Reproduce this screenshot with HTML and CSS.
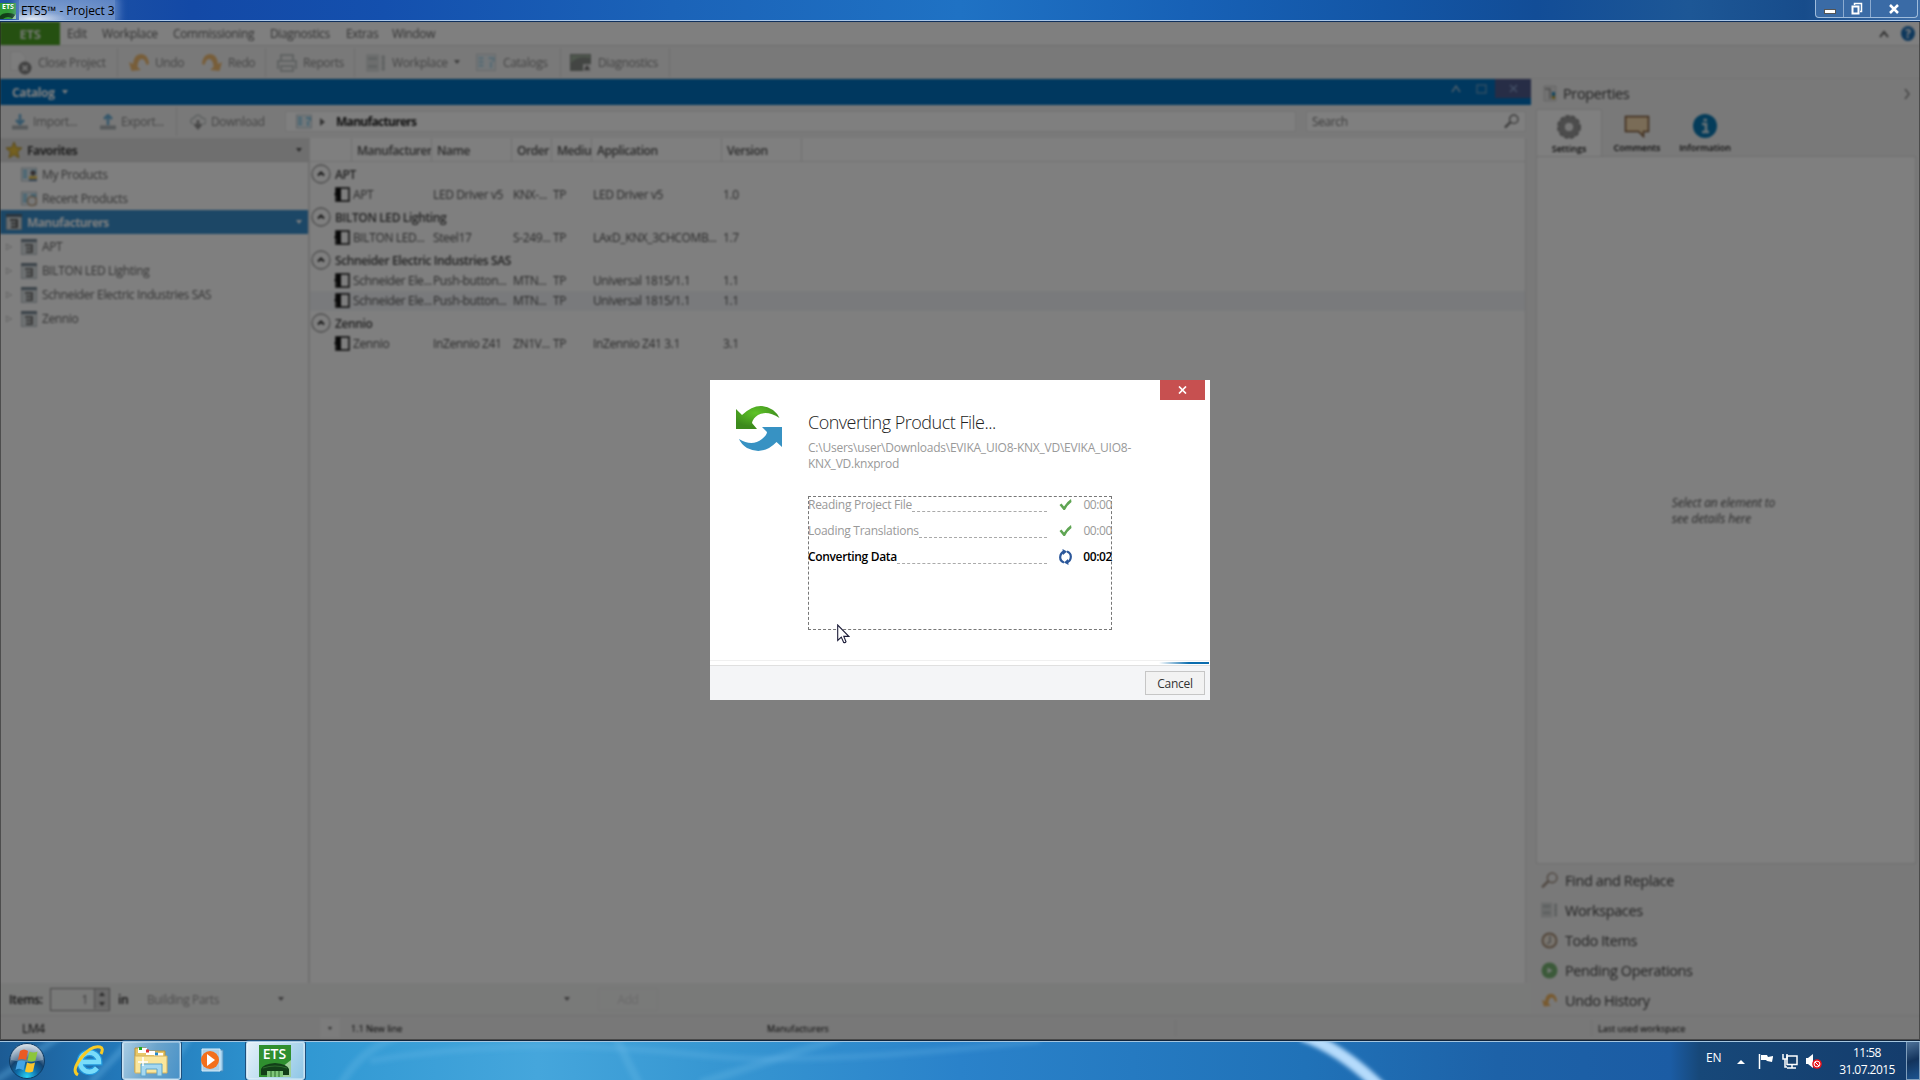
FILE: index.html
```html
<!DOCTYPE html>
<html lang="en">
<head>
  <meta charset="UTF-8" />
  <meta name="viewport" content="width=device-width, initial-scale=1.0"/>
  <title>ETS5 - Project 3</title>
  <link rel="stylesheet" href="styles.css">
</head>
<body>

  <!-- shared icons -->
  <svg class="sprite" width="0" height="0">
    <symbol id="i-ets" viewBox="0 0 32 32">
      <rect width="32" height="32" fill="#2f8f2f"/>
      <path d="M18 26 32 15v17H18z" fill="#9fd09a"/>
      <path d="M2 30v-6q2-5 14-6 12 1 14 6v6z" fill="#123f18"/>
      <path d="M8 32v-6h16v6z" fill="#7fc67a"/>
      <path d="M4 23q12-4 24 0M12 32v-6M16 32v-6M20 32v-6" stroke="#2c6b2c" stroke-width="1" fill="none"/>
    </symbol>
    <symbol id="i-undo" viewBox="0 0 20 20">
      <path d="M0 9 2.500 18 12 17 8.500 14Q9 6 13 6q3 0 4.500 6L20 11Q19 1 12 1 5 1 4 11z" fill="#f0a030"/>
    </symbol>
    <symbol id="i-box" viewBox="0 0 16 16">
      <rect x=".5" y=".5" width="15" height="15" fill="#d5dde0" stroke="#a3adb3"/>
      <path d="M0 1.500h16" stroke="#566878" stroke-width="3"/>
      <path d="M4 6h7v7H5M5 9.500h5" stroke="#5a5a5a" stroke-width="2" fill="none"/>
    </symbol>
    <symbol id="i-catalog" viewBox="0 0 16 16">
      <rect x=".5" y="1" width="15" height="13" fill="#dcecf4" stroke="#aab8c0"/>
      <path d="M2 4h4M2 7h4M2 10h4M10 4h4v3M12 7v5" stroke="#5eb4dc" stroke-width="1.800" fill="none"/>
    </symbol>
    <symbol id="i-device" viewBox="0 0 16 15">
      <rect x="2" y="1" width="13" height="13" fill="#fff" stroke="#222" stroke-width="1.600"/>
      <path d="M2 1h5v13H3V9L0 7.500 2 5z" fill="#111"/>
    </symbol>
    <symbol id="i-up" viewBox="0 0 20 20">
      <circle cx="10" cy="10" r="9" fill="none" stroke="#999" stroke-width="1.300"/>
      <path d="m7 11.500 3-3 3 3" stroke="#333" stroke-width="2" fill="none"/>
    </symbol>
    <symbol id="i-search" viewBox="0 0 16 16">
      <circle cx="10.500" cy="5.500" r="4.500" fill="none" stroke="currentColor" stroke-width="1.500"/>
      <path d="M7 8.500 1 14.500" stroke="currentColor" stroke-width="2.500"/>
    </symbol>
    <symbol id="i-check" viewBox="0 0 12 11">
      <path d="M0 6 2 4.500 4.500 7.500Q7 3 11.500 0L12 3Q8 6 5.500 11H4z" fill="#5fa553"/>
    </symbol>
    <symbol id="i-grid" viewBox="0 0 18 16">
      <rect width="12" height="16" fill="#ced2d2"/>
      <path d="M2 4h8M2 11h8M14 3h3M14 8h3M14 13h3M15.500 1v14" stroke="#a9b0b0" stroke-width="2.500"/>
    </symbol>
  </svg>

  <div class="titlebar">
    <div class="app-icon"><svg width="16" height="8" viewBox="0 0 16 8"><path d="M0 8V5q2-3 8-3t8 3v3h-3q-5-4-10 0z" fill="#123f18"/><path d="M12 8h4V3z" fill="#9fd09a"/></svg><b>ETS</b></div>
    <span class="title-text">ETS5™ - Project 3</span>
    <div class="win-buttons">
      <span><svg width="12" height="14"><rect x=".5" y="7.500" width="11" height="4" fill="#fff" stroke="#555"/></svg></span>
      <span><svg width="12" height="14"><path d="M3.500 3V1.500h7v8H9" fill="none" stroke="#fff" stroke-width="1.500"/><rect x="1.500" y="4.500" width="6" height="7" fill="none" stroke="#fff" stroke-width="2"/></svg></span>
      <span class="wide"><svg width="12" height="14"><path d="m2 3 8 8M10 3l-8 8" stroke="#fff" stroke-width="2.500"/></svg></span>
    </div>
  </div>

  <div class="window">
    <div class="app">
      <div class="menu">
        <b class="ets">ETS</b>
        <span class="m-edit">Edit</span><span class="m-work">Workplace</span><span class="m-comm">Commissioning</span><span class="m-diag">Diagnostics</span><span class="m-extras">Extras</span><span>Window</span>
        <div class="menu-right">
          <svg width="10" height="8"><path d="m1 7 4-5 4 5" stroke="#555" stroke-width="1.800" fill="none"/></svg>
          <i class="help">?</i>
        </div>
      </div>

      <div class="toolbar">
        <div class="tool t-close"><svg class="wide-icon" width="27" height="28"><path d="M3.500 2.500h10l5 5v14h-15z" fill="#fff" stroke="#ddd"/><circle cx="18" cy="19" r="6.500" fill="#444"/><path d="m15.500 16.500 5 5M20.500 16.500l-5 5" stroke="#ddd" stroke-width="2"/></svg>Close Project</div>
        <i class="sep"></i>
        <div class="tool t-undo"><svg width="20" height="20"><use href="#i-undo"/></svg>Undo</div>
        <div class="tool t-redo"><svg class="flip" width="20" height="20"><use href="#i-undo"/></svg>Redo</div>
        <i class="sep"></i>
        <div class="tool t-reports"><svg width="20" height="18"><path d="M4 7V1h12v6M1 15V7h18v8M4 12h12v5H4z" fill="none" stroke="#a6adad" stroke-width="2"/></svg>Reports</div>
        <i class="sep"></i>
        <div class="tool t-workplace"><svg width="20" height="18"><use href="#i-grid"/></svg>Workplace<i class="caret"></i></div>
        <div class="tool t-catalogs"><svg width="22" height="20"><use href="#i-catalog"/></svg>Catalogs</div>
        <i class="sep"></i>
        <div class="tool t-diag"><svg width="22" height="20"><rect y="1" width="21" height="17" fill="#737a73"/><path d="M1 10Q8 2 20 5V2H1z" fill="#8fa38c"/><rect x="13" y="11" width="8" height="8" fill="#ddd"/><path d="m17 12 3 5h-6z" fill="#555"/></svg>Diagnostics</div>
        <i class="sep"></i>
      </div>

      <div class="body">
        <div class="left">
          <div class="catalog-bar">
            <b>Catalog</b><i class="caret"></i>
            <div class="pane-buttons">
              <svg width="10" height="10"><path d="m1 8 4-6 4 6" stroke="#9bbbd4" stroke-width="1.500" fill="none"/></svg>
              <svg width="11" height="10"><rect x="1" y="1" width="9" height="8" stroke="#6aa0c8" stroke-width="1.300" fill="none"/></svg>
              <span><svg width="9" height="9"><path d="m1 1 7 7M8 1 1 8" stroke="#8aa4d0" stroke-width="1.300"/></svg></span>
            </div>
          </div>

          <div class="subbar">
            <div class="sub s-import"><svg width="16" height="16"><path d="M8 0v9M4 6l4 4 4-4" stroke="#4a9dcf" stroke-width="2.500" fill="none"/><path d="M0 13.500h16" stroke="#9ba2a6" stroke-width="4"/></svg>Import...</div>
            <div class="sub s-export"><svg width="16" height="16"><path d="M8 11V2M4 5l4-4 4 4" stroke="#4a9dcf" stroke-width="2.500" fill="none"/><path d="M0 13.500h16" stroke="#9ba2a6" stroke-width="4"/></svg>Export...</div>
            <i class="sep"></i>
            <div class="sub s-download"><svg width="16" height="16"><path d="M3 10Q0 9 1 6q1-2 3-2 4-6 8 0 4 0 4 4-1 2-3 2" stroke="#aeb6b6" stroke-width="1.500" fill="none"/><path d="M8 6v7M4.500 10 8 14l3.500-4" stroke="#777" stroke-width="2.500" fill="none"/></svg>Download</div>
            <div class="path"><svg width="16" height="16"><use href="#i-catalog"/></svg><svg class="arrow" width="5" height="8"><path d="m0 0 5 4-5 4z" fill="#333"/></svg><b>Manufacturers</b></div>
            <div class="search"><span>Search</span><svg width="15" height="15"><use href="#i-search"/></svg></div>
          </div>

          <div class="panes">
            <div class="tree">
              <div class="head"><svg width="16" height="16"><path d="m8 0 2.300 5.500 5.700.5-4.400 3.800L13 16l-5-3.300L3 16l1.400-6.200L0 6l5.700-.5z" fill="#e8c040" stroke="#b09030"/></svg><b>Favorites</b><i class="caret"></i></div>
              <div class="leaf"><svg width="16" height="16"><use href="#i-catalog"/><circle cx="12" cy="6" r="2.500" fill="#433"/><path d="M8 9h8v3H8z" fill="#e8b830"/><path d="M8 12h8v2H8z" fill="#446c99"/></svg>My Products</div>
              <div class="leaf"><svg width="16" height="16"><use href="#i-catalog"/><circle cx="11" cy="10" r="4.500" fill="#eee" stroke="#a58660" stroke-width="1.500"/></svg>Recent Products</div>
              <div class="head active"><svg width="16" height="16"><use href="#i-box"/></svg><b>Manufacturers</b><i class="caret"></i></div>
              <div class="leaf"><i class="exp">▷</i><svg width="16" height="16"><use href="#i-box"/></svg>APT</div>
              <div class="leaf"><i class="exp">▷</i><svg width="16" height="16"><use href="#i-box"/></svg>BILTON LED Lighting</div>
              <div class="leaf"><i class="exp">▷</i><svg width="16" height="16"><use href="#i-box"/></svg>Schneider Electric Industries SAS</div>
              <div class="leaf"><i class="exp">▷</i><svg width="16" height="16"><use href="#i-box"/></svg>Zennio</div>
            </div>

            <div class="grid">
              <div class="cols"><span></span><span>Manufacturer</span><span>Name</span><span>Order</span><span>Mediu</span><span>Application</span><span>Version</span></div>
              <div class="group"><svg width="20" height="20"><use href="#i-up"/></svg>APT</div>
              <div class="row"><svg width="16" height="15"><use href="#i-device"/></svg><span>APT</span><span>LED Driver v5</span><span>KNX-...</span><span>TP</span><span>LED Driver v5</span><span>1.0</span></div>
              <div class="group"><svg width="20" height="20"><use href="#i-up"/></svg>BILTON LED Lighting</div>
              <div class="row"><svg width="16" height="15"><use href="#i-device"/></svg><span>BILTON LED...</span><span>Steel17</span><span>S-249...</span><span>TP</span><span>LAxD_KNX_3CHCOMB...</span><span>1.7</span></div>
              <div class="group"><svg width="20" height="20"><use href="#i-up"/></svg>Schneider Electric Industries SAS</div>
              <div class="row"><svg width="16" height="15"><use href="#i-device"/></svg><span>Schneider Ele...</span><span>Push-button...</span><span>MTN...</span><span>TP</span><span>Universal 1815/1.1</span><span>1.1</span></div>
              <div class="row hover"><svg width="16" height="15"><use href="#i-device"/></svg><span>Schneider Ele...</span><span>Push-button...</span><span>MTN...</span><span>TP</span><span>Universal 1815/1.1</span><span>1.1</span></div>
              <div class="group"><svg width="20" height="20"><use href="#i-up"/></svg>Zennio</div>
              <div class="row"><svg width="16" height="15"><use href="#i-device"/></svg><span>Zennio</span><span>InZennio Z41</span><span>ZN1V...</span><span>TP</span><span>InZennio Z41 3.1</span><span>3.1</span></div>
            </div>
          </div>

          <div class="items">
            <span class="lbl">Items:</span>
            <div class="spinner"><span>1</span><div class="arrows"><i class="caret flipv"></i><i class="caret"></i></div></div>
            <span class="lbl in">in</span>
            <div class="combo parts"><span>Building Parts</span><i class="caret"></i></div>
            <div class="combo"><i class="caret"></i></div>
            <div class="add">Add</div>
          </div>
        </div>

        <div class="right">
          <div class="prop-head"><svg width="14" height="18"><path d="M1 1h12v15H1z" fill="#e5e5e5" stroke="#ccc"/><path d="M2 4h5v10" stroke="#999" stroke-width="1.500" fill="none"/><path d="M9 7h3v4H9z" fill="#2288bb"/><path d="M9 11h3v3H9z" fill="#bba030"/></svg><span>Properties</span><svg class="chev" width="7" height="12"><path d="m1 1 4 5-4 5" stroke="#888" stroke-width="1.500" fill="none"/></svg></div>
          <div class="tabs">
            <div class="tab on"><svg width="24" height="24"><circle cx="12" cy="12" r="7.500" fill="none" stroke="#999" stroke-width="7"/><circle cx="12" cy="12" r="11" fill="none" stroke="#888" stroke-width="2" stroke-dasharray="4 2"/><circle cx="12" cy="12" r="3" fill="#eee"/></svg>Settings</div>
            <div class="tab cm"><svg width="26" height="24"><path d="M1.500 2.500h23v15h-5v5l-5-5h-13z" fill="#f4d9ae" stroke="#7a5536" stroke-width="1.500"/></svg>Comments</div>
            <div class="tab inf"><svg width="24" height="24"><circle cx="12" cy="12" r="12" fill="#0878b4"/><path d="M9 10h4v8M9 18h7M10.500 6h3.500" stroke="#cfe4ee" stroke-width="2.600" fill="none"/></svg>Information</div>
          </div>
          <div class="details"><p>Select an element to<br>see details here</p></div>
          <ul class="tools">
            <li><svg width="17" height="17" color="#8a7564"><use href="#i-search"/></svg>Find and Replace</li>
            <li><svg width="17" height="16"><use href="#i-grid"/></svg>Workspaces</li>
            <li><svg width="17" height="17"><circle cx="8.500" cy="8.500" r="7" fill="#f2e6d6" stroke="#8a6a4a" stroke-width="2"/><path d="M9 4v6L6 12" stroke="#777" stroke-width="1.500" fill="none"/></svg>Todo Items</li>
            <li><svg width="17" height="17"><circle cx="8.500" cy="8.500" r="8" fill="#4fa04a"/><path d="M6.500 5.500v6l5-3z" fill="#e8f5e8"/></svg>Pending Operations</li>
            <li><svg width="17" height="15"><use href="#i-undo"/></svg>Undo History</li>
          </ul>
        </div>
      </div>

      <div class="status">
        <span class="st-line">LM4</span><div class="st-drop"><i class="caret"></i></div><span class="st-new">1.1 New line</span><span class="st-man">Manufacturers</span><span class="st-gap"></span><span class="st-last">Last used workspace</span>
      </div>
    </div>
    <div class="shade"></div>
  </div>

  <div class="taskbar">
    <svg class="wall" width="1920" height="39" preserveAspectRatio="none">
      <defs>
        <linearGradient id="wg"><stop offset="0" stop-color="#1c5b94"/><stop offset=".06" stop-color="#2277b8"/><stop offset=".15" stop-color="#2f97d2"/><stop offset=".28" stop-color="#45a6dc"/><stop offset=".37" stop-color="#3797d2"/><stop offset=".5" stop-color="#2a82ca"/><stop offset=".68" stop-color="#2072b8"/><stop offset=".78" stop-color="#1d62a8"/><stop offset=".87" stop-color="#1b5ca4"/><stop offset=".885" stop-color="#174879"/><stop offset="1" stop-color="#143c6c"/></linearGradient>
        <filter id="soft" x="-20%" y="-50%" width="140%" height="200%"><feGaussianBlur stdDeviation="2.200"/></filter>
      </defs>
      <rect width="1920" height="39" fill="url(#wg)"/>
      <g filter="url(#soft)" fill="none">
        <path d="M1302-6Q1342 8 1382 48" stroke="#b5dbfc" stroke-width="12"/>
        <path d="M340 45Q360 8 400-5M615-5 640 45M700 42 840-3" stroke="#7cc4ee" stroke-opacity=".22" stroke-width="8"/>
        <path d="M370 20Q520-6 700 14 800 26 1040 0" stroke="#7cc4ee" stroke-opacity=".2" stroke-width="6"/>
        <path d="M-5 40 60-5M90 42 135-5M160 42 190-5" stroke="#68b4e4" stroke-opacity=".35" stroke-width="7"/>
      </g>
    </svg>
    <div class="task start"><svg width="38" height="38" viewBox="0 0 38 38">
      <defs><radialGradient id="orb" cx=".5" cy=".95" r=".9"><stop offset="0" stop-color="#27d3f5"/><stop offset=".35" stop-color="#0e6ba8"/><stop offset=".6" stop-color="#15436f"/><stop offset="1" stop-color="#c0cedb"/></radialGradient></defs>
      <circle cx="19" cy="19" r="17.500" fill="url(#orb)" stroke="#0e3c66"/>
      <path d="M3 18a16 16 0 0 1 32 0Q19 22 3 18z" fill="#fff" fill-opacity=".28"/>
      <path d="M12 9q4-3 8 0l-2 9q-4-2-8 0z" fill="#ea5a24"/>
      <path d="M21.500 9.500q4 2 8 0l-2 9q-4 2-8 0z" fill="#8cc63c"/>
      <path d="M9.500 19.500q4-2 8 0l-2 9q-4-3-8-.5z" fill="#45a4e4"/>
      <path d="M19 20.500q4 2 8 0l-2 9q-4 2-8 0z" fill="#fcc52c"/></svg></div>
    <div class="task ie"><svg width="32" height="34" viewBox="0 0 32 34">
      <path d="M8 19h18a9.500 9.500 0 1 0-2 6" transform="translate(0 -1)" stroke="#2398dc" stroke-width="7" fill="none"/>
      <path d="M8 19h18a9.500 9.500 0 1 0-2 6" transform="translate(0 -1)" stroke="#79dcfa" stroke-width="4.500" fill="none"/>
      <path d="M5 31Q-2 27 8 14T27 3q4 1 1 7" stroke="#f8cb25" stroke-width="3" fill="none"/></svg></div>
    <div class="task framed"><svg width="34" height="32" viewBox="0 0 34 32">
      <path d="M1 27V3h11l2 3h17v21z" fill="#e8c768" stroke="#b8933c"/>
      <path d="M4 3h9v5H4zM12 6h9v4h-9zM20 8h9v4h-9z" fill="#fff"/>
      <path d="M5 3.500h3" stroke="#2a2" stroke-width="3"/><path d="M12 6h3" stroke="#d33" stroke-width="3"/><path d="M21 9h3" stroke="#28c" stroke-width="3"/>
      <path d="M1 11h32v17H1z" fill="#fae69c" stroke="#d5b25c"/>
      <path d="M7 31V19h21v12h-5v-7H12v7z" fill="#a5d8f0" stroke="#5aa4cc"/>
      <path d="M9 12v9M4 17h10" stroke="#fff" stroke-width="1.500"/></svg></div>
    <div class="task wmp"><svg width="28" height="28" viewBox="0 0 28 28">
      <path d="M18 3h5v21h-5z" fill="#9dcdec" stroke="#4d8dbb"/><path d="M2 2h18v22H2z" fill="#a9cfe8" stroke="#d7ecf8"/>
      <circle cx="10" cy="13" r="9" fill="#f36f1c"/><path d="M7 7v12l8-6z" fill="#fff"/></svg></div>
    <div class="task framed current"><div class="ets-tile"><svg width="32" height="32"><use href="#i-ets"/></svg><b>ETS</b></div></div>
    <div class="tray">
      <span class="lang">EN</span>
      <svg class="t-up" width="8" height="4"><path d="m0 4 4-4 4 4z" fill="#fff"/></svg>
      <svg class="t-flag" width="16" height="15"><path d="M1.500 0v15" stroke="#fff" stroke-width="1.500"/><path d="M3 1h6l1 2 5-1v1l-1 5-5-1-1-1H3z" fill="#fff"/></svg>
      <svg class="t-net" width="16" height="15"><rect x="5" y="2" width="10" height="8.500" fill="#17406c" stroke="#fff" stroke-width="1.500"/><path d="M5 14h9M10 11v3M1 0v5h4V0M3 5v8h2" stroke="#fff" stroke-width="1.500" fill="none"/></svg>
      <svg class="t-vol" width="16" height="15"><path d="M0 4h2l5-4v14l-5-4H0z" fill="#fff"/><circle cx="11" cy="10" r="4.800" fill="#e8141c"/><circle cx="11" cy="10" r="2.900" fill="none" stroke="#fff" stroke-width="1"/><path d="m9 8 4 4" stroke="#fff" stroke-width="1"/></svg>
      <div class="clock">11:58<br>31.07.2015</div>
      <div class="peek"></div>
    </div>
  </div>

  <div class="dialog">
    <button class="x"><svg width="9" height="8"><path d="m1 .5 7 7M8 .5l-7 7" stroke="#fff" stroke-width="1.700"/></svg></button>
    <svg class="sync" width="46" height="46" viewBox="0 0 46 46">
      <defs>
        <radialGradient id="gr" cx=".45" cy=".3" r=".6"><stop offset="0" stop-color="#5fc428"/><stop offset="1" stop-color="#3c8a1c"/></radialGradient>
      </defs>
      <path d="M0 3 6 9Q22-6 37 4 41 7 43.500 12 31 4 22 9 17 12 16 17L21 23H0z" fill="url(#gr)"/>
      <path d="M26 21H46V41L40.500 36Q27 50 11 42 5 38 3 33 16 41 26 33 31 29 31 26z" fill="#3792c3"/>
    </svg>
    <div class="dlg-main">
      <h1>Converting Product File...</h1>
      <p class="file">C:\Users\user\Downloads\EVIKA_UIO8-KNX_VD\EVIKA_UIO8-<br>KNX_VD.knxprod</p>
      <div class="steps">
        <div class="step"><span>Reading Project File</span><i></i><svg width="12" height="11"><use href="#i-check"/></svg><em>00:00</em></div>
        <div class="step"><span>Loading Translations</span><i></i><svg width="12" height="11"><use href="#i-check"/></svg><em>00:00</em></div>
        <div class="step now"><span>Converting Data</span><i></i><svg width="13" height="16" viewBox="0 0 13 16"><path d="M5 13.500Q1 12 1.200 8 1.400 4 5 2.600M8 2.500Q12 4 11.800 8 11.600 12 8 13.400" stroke="#2b579a" stroke-width="2.200" fill="none"/><path d="M3.500 0 8 2.500 4 6zM9.500 16 5 13.500 9 10z" fill="#2b579a"/></svg><em>00:02</em></div>
      </div>
    </div>
    <div class="progress"><i></i></div>
    <div class="dlg-foot"><button>Cancel</button></div>
  </div>

  <svg class="cursor" width="13" height="20"><path d="M.7 1v15.500l3.600-3.400L6.700 18.500q1.500.6 2.300-.8L6.800 12.400h5z" fill="#fff" stroke="#1c1c38" stroke-width="1.100"/></svg>

</body>
</html>
```

FILE: styles.css
```css
* {
  box-sizing: border-box;
}
body {
  margin: 0;
  width: 1920px;
  height: 1080px;
  overflow: hidden;
  position: relative;
  font-family: "Open Sans", "Noto Sans", sans-serif;
  font-size: 12px;
  letter-spacing: -0.38px;
  color: #444;
  display: flex;
  flex-direction: column;
}
i, em {
  font-style: normal;
}
svg {
  display: block;
  flex: none;
}
span, b, h1, li {
  white-space: nowrap;
}
.sprite {
  position: absolute;
}
.caret {
  display: inline-block;
  border: 3.5px solid transparent;
  border-top: 4.5px solid #555;
  border-bottom: 0;
}
.flipv {
  transform: rotate(180deg);
}

/* title bar */
.titlebar {
  flex: none;
  height: 22px;
  display: flex;
  background: linear-gradient(90deg, #2356a4 0, #1349a6 10%, #1450ae 20%, #1b63b8 35%, #1f72c4 50%, #1761b6 62%, #1356a6 72%, #124d97 80%, #1d5796 88%, #174c8b 94%, #3f6fa8 100%);
  border-bottom: 1px solid #10305c;
  box-shadow: inset 0 -1px #a9c6e8;
}
.app-icon {
  width: 16px;
  height: 16px;
  margin-top: 3px;
  background: #2f9a35;
  color: #fff;
  font-size: 7px;
  line-height: 8px;
  text-align: center;
  letter-spacing: 0;
  display: flex;
  flex-direction: column-reverse;
}
.title-text {
  margin-left: 3px;
  padding: 0 1px 0 2px;
  height: 20px;
  line-height: 21px;
  letter-spacing: -0.1px;
  color: #000;
  background: radial-gradient(ellipse at 14% 95%, #ffffffe0 0, #b9cdeaa0 30%, #8facdb90 100%);
  box-shadow: 0 0 8px 4px #8facdb90;
  clip-path: inset(0 -14px);
}
.win-buttons {
  margin: 0 2px 0 auto;
  height: 18px;
  display: flex;
  border: 1px solid #9fbcdc;
  border-top: 0;
  border-radius: 0 0 4px 4px;
  background: #3a6ba6;
}
.win-buttons span {
  width: 27px;
  display: flex;
  justify-content: center;
  align-items: center;
  border-left: 1px solid #8cabd0;
}
.win-buttons span:first-child {
  border-left: 0;
}
.win-buttons .wide {
  width: 47px;
}

/* application behind the dialog */
.window {
  flex: none;
  position: relative;
  height: 1018px;
  overflow: hidden;
  background: #eee;
}
.shade {
  position: absolute;
  inset: 0;
  background: rgba(0, 0, 0, 0.5);
  border: 1px solid #00000060;
  border-top: 0;
}
.app {
  height: 1018px;
  display: flex;
  flex-direction: column;
  background: #f3f3f3;
  filter: blur(1px);
}
.menu {
  height: 24px;
  display: flex;
  align-items: center;
  background: #fff;
  border-bottom: 1px solid #dcdcdc;
  color: #666;
}
.ets {
  width: 60px;
  height: 23px;
  margin-right: 7px;
  line-height: 24px;
  text-align: center;
  background: #4aa022;
  color: #e8f0e4;
  font-size: 13px;
}
.m-edit { width: 35px; }
.m-work { width: 71px; }
.m-comm { width: 97px; }
.m-diag { width: 76px; }
.m-extras { width: 46px; }
.menu-right {
  margin-left: auto;
  display: flex;
  align-items: center;
  gap: 12px;
  padding-right: 5px;
}
.help {
  width: 14px;
  height: 15px;
  border-radius: 50%;
  background: #1d70b8;
  color: #fff;
  font-weight: bold;
  line-height: 15px;
  text-align: center;
}
.toolbar {
  height: 33px;
  display: flex;
  align-items: center;
  padding: 1px 0 0 12px;
  border-bottom: 1px solid #e3e3e3;
  color: #888;
}
.tool {
  display: flex;
  align-items: center;
}
.tool svg {
  margin-right: 6px;
  opacity: 0.65;
}
.tool svg[width="22"] {
  margin: 0 6px 0 -2px;
}
.t-catalogs svg {
  opacity: 0.45;
}
.tool .wide-icon {
  margin: 0 4px 0 -5px;
}
.t-diag svg {
  opacity: 0.85;
}
.tool .caret {
  margin: -2px 0 0 6px;
  border-width: 3px;
  border-top-width: 4px;
  border-bottom-width: 0;
  border-top-color: #777;
}
.flip {
  transform: scaleX(-1);
}
.sep {
  width: 1px;
  height: 29px;
  margin-right: 11px;
  background: #dcdcdc;
}
.t-close { width: 105px; }
.t-undo { width: 73px; }
.t-redo { width: 63px; }
.t-reports { width: 77px; }
.t-workplace { width: 111px; }
.t-catalogs { width: 83px; }
.t-diag { width: 97px; }

.body {
  height: 936px;
  display: flex;
}
.left {
  width: 1531px;
  display: flex;
  flex-direction: column;
}
.catalog-bar {
  height: 26px;
  display: flex;
  align-items: center;
  padding-left: 12px;
  background: #0070be;
  color: #fff;
}
.catalog-bar .caret {
  margin-left: 7px;
  border-top-color: #fff;
}
.pane-buttons {
  margin-left: auto;
  align-self: flex-start;
  height: 19px;
  display: flex;
  align-items: center;
}
.pane-buttons svg + svg {
  margin: 0 8px 0 15px;
}
.pane-buttons span {
  width: 36px;
  height: 19px;
  display: flex;
  align-items: center;
  justify-content: center;
  background: #4f5a8c;
}
.subbar {
  height: 33px;
  display: flex;
  align-items: center;
  padding-left: 12px;
  color: #888;
}
.sub {
  display: flex;
  align-items: center;
  gap: 5px;
}
.sub svg {
  opacity: 0.8;
}
.s-import { width: 88px; }
.s-export { width: 76px; }
.s-download { width: 95px; }
.subbar .sep {
  margin-right: 13px;
}
.path {
  width: 1011px;
  height: 21px;
  display: flex;
  align-items: center;
  padding-left: 10px;
  background: #fff;
  border: 1px solid #e6e6e6;
  color: #222;
}
.path svg {
  opacity: 0.75;
}
.path .arrow {
  margin: 0 11px 0 8px;
}
.path b {
  letter-spacing: -0.7px;
}
.search {
  width: 220px;
  height: 21px;
  margin-left: 10px;
  padding: 0 6px 0 5px;
  display: flex;
  align-items: center;
  justify-content: space-between;
  background: #fff;
  border: 1px solid #e6e6e6;
  color: #777;
}
.panes {
  height: 845px;
  display: flex;
}
.tree {
  width: 308px;
  background: #fff;
  color: #666;
}
.tree b {
  letter-spacing: -0.6px;
}
.head {
  height: 24px;
  display: flex;
  align-items: center;
  gap: 5px;
  padding: 1px 6px 0;
  background: #dfdfdf;
  border-bottom: 1px solid #d0d0d0;
  color: #444;
}
.head .caret {
  margin-left: auto;
}
.head.active {
  background: #388ecc;
  border-color: #388ecc;
  color: #fff;
}
.active .caret {
  border-top-color: #fff;
}
.leaf {
  height: 24px;
  display: flex;
  align-items: center;
  gap: 5px;
  padding: 1px 0 0 21px;
}
.leaf svg {
  opacity: 0.8;
}
.exp {
  width: 10px;
  margin: 0 0 2px -15px;
  font-size: 8px;
  color: #999;
}
.grid {
  width: 1218px;
  background: #fff;
  border-left: 2px solid #e0e0e0;
  border-right: 1px solid #e0e0e0;
}
.cols {
  height: 24px;
  display: flex;
  border-bottom: 1px solid #e4e4e4;
  font-weight: 600;
  color: #555;
  line-height: 25px;
}
.cols span, .row span {
  overflow: hidden;
  width: 80px;
}
.cols span {
  border-right: 1px solid #e0e0e0;
  padding-left: 5px;
  letter-spacing: -0.45px;
}
.cols span:nth-child(1) { width: 42px; }
.cols span:nth-child(4), .cols span:nth-child(5), .row span:nth-child(4), .row span:nth-child(5) { width: 40px; }
.cols span:nth-child(6), .row span:nth-child(6) { width: 130px; }
.group {
  height: 23px;
  display: flex;
  align-items: center;
  gap: 4px;
  padding: 1px 0 0 1px;
  font-weight: 600;
  color: #444;
}
.row {
  height: 20px;
  display: flex;
  align-items: center;
  padding: 0 0 2px 24px;
  color: #555;
}
.row svg {
  margin: 1px 3px 0 0;
}
.hover {
  background: #f3f5f9;
}
.items {
  height: 32px;
  display: flex;
  align-items: center;
  padding: 0 0 0 9px;
  background: #f3f4f3;
  color: #222;
}
.items .lbl {
  width: 41px;
  font-weight: 600;
}
.spinner {
  width: 60px;
  height: 23px;
  display: flex;
  justify-content: flex-end;
  align-items: center;
  border: 1.5px solid #888;
  color: #777;
}
.arrows {
  width: 15px;
  height: 20px;
  margin-left: 6px;
  background: #d5d5d5;
  border-left: 1px solid #999;
  display: flex;
  flex-direction: column;
  align-items: center;
  justify-content: space-around;
}
.items .in {
  width: 29px;
  padding-left: 8px;
}
.combo {
  width: 286px;
  display: flex;
  align-items: center;
  color: #999;
}
.combo .caret {
  margin-left: auto;
  border-top-color: #777;
}
.parts {
  width: 137px;
  margin-left: 8px;
}
.items .add {
  width: 60px;
  height: 23px;
  margin-left: 28px;
  line-height: 22px;
  text-align: center;
  border: 1px solid #ededed;
  color: #d4d4d4;
}

/* properties side */
.right {
  width: 389px;
  padding: 0 4px 0 5px;
  display: flex;
  flex-direction: column;
  font-size: 14.5px;
}
.prop-head {
  height: 30px;
  display: flex;
  align-items: center;
  gap: 6px;
  padding: 0 5px 0 7px;
  color: #444;
}
.chev {
  margin-left: auto;
}
.tabs {
  height: 47px;
  display: flex;
}
.tab {
  height: 48px;
  width: 66px;
  display: flex;
  flex-direction: column;
  align-items: center;
  gap: 3px;
  padding-top: 5px;
  font-size: 9px;
  line-height: 14px;
  letter-spacing: -0.05px;
  font-weight: 600;
  color: #111;
}
.tab.on {
  background: #fff;
  border: 1px solid #e0e0e0;
  border-bottom: 0;
}
.cm { width: 70px; }
.inf { width: 66px; }
.details {
  height: 710px;
  display: flex;
  align-items: center;
  justify-content: center;
  background: #fff;
  border: 1px solid #dedede;
  font-size: 12px;
  font-style: italic;
  letter-spacing: -0.15px;
  color: #555;
}
.details p {
  margin: 0;
  padding: 2px 5px 0 0;
  line-height: 16px;
}
.tools {
  list-style: none;
  margin: 1px 0 0;
  padding: 0 0 0 5px;
  color: #444;
}
.tools li {
  height: 30px;
  display: flex;
  align-items: center;
  gap: 7px;
}
.tools svg {
  opacity: 0.75;
}
.status {
  height: 25px;
  display: flex;
  align-items: center;
  padding-left: 22px;
  background: #f0f0f0;
  border-top: 1px solid #e0e0e0;
  color: #222;
}
.st-line { width: 298px; }
.st-drop {
  width: 20px;
  height: 20px;
  background: #f8f8f8;
  display: flex;
  align-items: center;
  justify-content: center;
}
.st-drop .caret {
  border-width: 2.5px;
  border-top-width: 3px;
  border-bottom-width: 0;
}
.st-new, .st-man, .st-last {
  font-size: 9px;
  letter-spacing: 0;
  color: #000;
}
.st-new { width: 412px; padding-left: 11px; }
.st-man { width: 423px; padding-left: 15px; }
.st-gap { width: 417px; height: 16px; border: 1px solid #e4e4e4; border-width: 0 1px; }
.st-last { padding-left: 6px; }

/* taskbar */
.taskbar {
  flex: none;
  position: relative;
  height: 40px;
  display: flex;
  border-top: 1px solid #10243c;
}
.wall {
  position: absolute;
  left: 0;
  top: 0;
  z-index: -1;
}
.taskbar::before {
  content: "";
  position: absolute;
  left: 0;
  right: 0;
  height: 1px;
  background: #a5c6e0;
}
.task {
  display: flex;
  align-items: center;
  justify-content: center;
  width: 59px;
  height: 39px;
}
.start { width: 54px; }
.ie { width: 68px; padding-left: 2px; }
.framed {
  padding-right: 2px;
  border: 1px solid #c8e2f2;
  border-radius: 3px;
  background: linear-gradient(110deg, #a9cde4 0, #6ba4cc 50%, #4892c8 100%);
  box-shadow: inset 0 0 0 1px #ffffff50, 0 0 0 1px #1d4f7c;
}
.wmp { width: 65px; }
.current {
  background: linear-gradient(120deg, #e4f1f9 0, #b2d8ee 60%, #8ec6e6 100%);
}
.ets-tile {
  position: relative;
  width: 32px;
  height: 32px;
}
.ets-tile b {
  position: absolute;
  inset: 0;
  color: #fff;
  font-size: 14px;
  font-weight: 600;
  line-height: 17px;
  text-align: center;
  letter-spacing: 0;
}
.tray {
  margin-left: auto;
  display: flex;
  color: #fff;
  line-height: 17px;
}
.lang { margin-top: 8px; width: 31px; letter-spacing: -0.2px; }
.t-up { margin: 19px 13px 0 0; }
.t-flag { margin: 13px 8px 0 0; }
.t-net { margin: 13px 8px 0 0; }
.t-vol { margin: 13px 17px 0 0; }
.clock {
  margin-top: 3px;
  width: 56px;
  text-align: center;
  letter-spacing: -0.55px;
}
.peek {
  width: 14px;
  height: 39px;
  margin-left: 11px;
  border: 1px solid #7f9ebc;
  background: linear-gradient(160deg, #4e7299 0, #12335c 50%, #1d5490 100%);
}

/* dialog */
.dialog {
  position: absolute;
  left: 710px;
  top: 380px;
  width: 500px;
  height: 320px;
  display: grid;
  grid-template: 280px 5px 35px / 98px 1fr;
  background: #fff;
}
.x {
  position: absolute;
  right: 5px;
  top: 0;
  width: 45px;
  height: 20px;
  padding: 0 1px 1px 0;
  border: 0;
  background: #c75050;
  display: flex;
  align-items: center;
  justify-content: center;
}
.sync {
  margin: 26px 0 0 26px;
}
.dlg-main {
  padding-top: 28px;
  color: #999;
}
.dlg-main h1 {
  margin: 0;
  font-size: 18px;
  font-weight: 300;
  line-height: 28px;
  letter-spacing: -0.5px;
  color: #222;
}
.file {
  margin: 4px 0 0;
  line-height: 16px;
  letter-spacing: -0.23px;
}
.steps {
  width: 304px;
  height: 134px;
  margin-top: 24px;
  border: 1px dashed #777;
  letter-spacing: -0.27px;
}
.step {
  height: 26px;
  display: flex;
  margin: 0 -1px;
  line-height: 16px;
}
.step i {
  flex: 1;
  height: 15px;
  border-bottom: 1px dashed #aaa;
}
.step svg {
  width: 13px;
  margin: 2px 0 0 12px;
}
.step em {
  width: 40px;
  text-align: right;
  letter-spacing: -0.4px;
}
.now {
  color: #000;
  font-weight: 600;
  letter-spacing: -0.35px;
}
.step.now svg {
  margin-top: 0;
}
.progress {
  grid-column: 1 / 3;
  display: flex;
  justify-content: flex-end;
  align-items: center;
  padding-right: 1px;
  border-top: 1px solid #f0f0f0;
}
.progress i {
  width: 50px;
  height: 2px;
  background: linear-gradient(90deg, #fff, #0a6cae 60%);
}
.dlg-foot {
  grid-column: 1 / 3;
  display: flex;
  justify-content: flex-end;
  padding: 5px 5px 0;
  background: #f4f5f7;
  border-top: 1px solid #e0e0e0;
}
.dlg-foot button {
  width: 60px;
  height: 24px;
  padding: 0;
  border: 1px solid #c6c6c6;
  background: #f2f2f2;
  font: inherit;
  letter-spacing: -0.3px;
  color: #333;
}
.cursor {
  position: absolute;
  left: 837px;
  top: 624px;
}
```
